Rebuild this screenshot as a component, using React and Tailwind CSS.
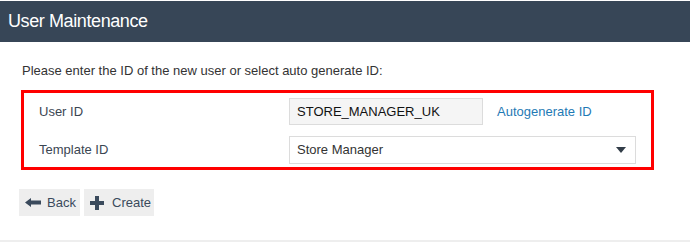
import { useState } from 'react';

const font = { fontFamily: '"Liberation Sans", Arial, sans-serif' };

const BackIcon = () => (
  <svg width="16" height="9" viewBox="0 0 16 9" className="text-[#3a4a5c]">
    <path d="M0 4.5 L6 0 L6 2.5 L16 2.5 L16 6.5 L6 6.5 L6 9 Z" fill="currentColor" />
  </svg>
);

const PlusIcon = () => (
  <svg width="14" height="14" viewBox="0 0 14 14" className="text-[#3a4a5c]">
    <path d="M5 0 H9 V5 H14 V9 H9 V14 H5 V9 H0 V5 H5 Z" fill="currentColor" />
  </svg>
);

export default function App() {
  const [userId, setUserId] = useState('STORE_MANAGER_UK');

  return (
    <div className="w-[690px] h-[242px] bg-white flex flex-col" style={font}>
      {/* Header */}
      <div className="mt-px h-[41px] bg-[#374657] flex items-center pl-2">
        <h1 className="text-[18px] text-white tracking-[-0.4px]">User Maintenance</h1>
      </div>

      {/* Body */}
      <div className="flex-1 pl-[21px] pt-[21px]">
        <p className="text-[13px] leading-4 text-[#333] pl-px">
          Please enter the ID of the new user or select auto generate ID:
        </p>

        <div className="mt-[11px] w-[633px] h-[80px] border-[3px] border-[#ff0000] pl-[15px] pt-[5px] flex flex-col gap-[11px]">
          <div className="flex items-center">
            <label className="w-[250px] text-[13px] text-[#3b4652]">User ID</label>
            <input
              value={userId}
              onChange={(e) => setUserId(e.target.value)}
              className="w-[194px] h-[27px] bg-[#f5f5f5] border border-[#dcdcdc] px-[7px] text-[13px] text-[#111] outline-none"
            />
            <a href="#" className="ml-[14px] text-[13px] text-[#1f7ab5]">Autogenerate ID</a>
          </div>
          <div className="flex items-center">
            <label className="w-[250px] text-[13px] text-[#3b4652]">Template ID</label>
            <div className="w-[347px] h-[28px] bg-white border border-[#dcdcdc] flex items-center justify-between pl-[7px] pr-[9px]">
              <span className="text-[13px] text-[#333]">Store Manager</span>
              <svg width="10" height="6" viewBox="0 0 10 6">
                <path d="M0 0 H10 L5 6 Z" fill="#323d48" />
              </svg>
            </div>
          </div>
        </div>

        <div className="mt-[19px] flex gap-1 -ml-[2px]">
          <button className="w-[61px] h-[27px] bg-[#eeeeee] flex items-center pl-[6px] gap-[6px] text-[13px] text-[#3a4a5c]">
            <BackIcon />
            <span>Back</span>
          </button>
          <button className="w-[70px] h-[27px] bg-[#eeeeee] flex items-center pl-[6px] gap-[8px] text-[13px] text-[#3a4a5c]">
            <PlusIcon />
            <span>Create</span>
          </button>
        </div>
      </div>

      <div className="h-[2px] bg-[#eeeeee]" />
    </div>
  );
}
